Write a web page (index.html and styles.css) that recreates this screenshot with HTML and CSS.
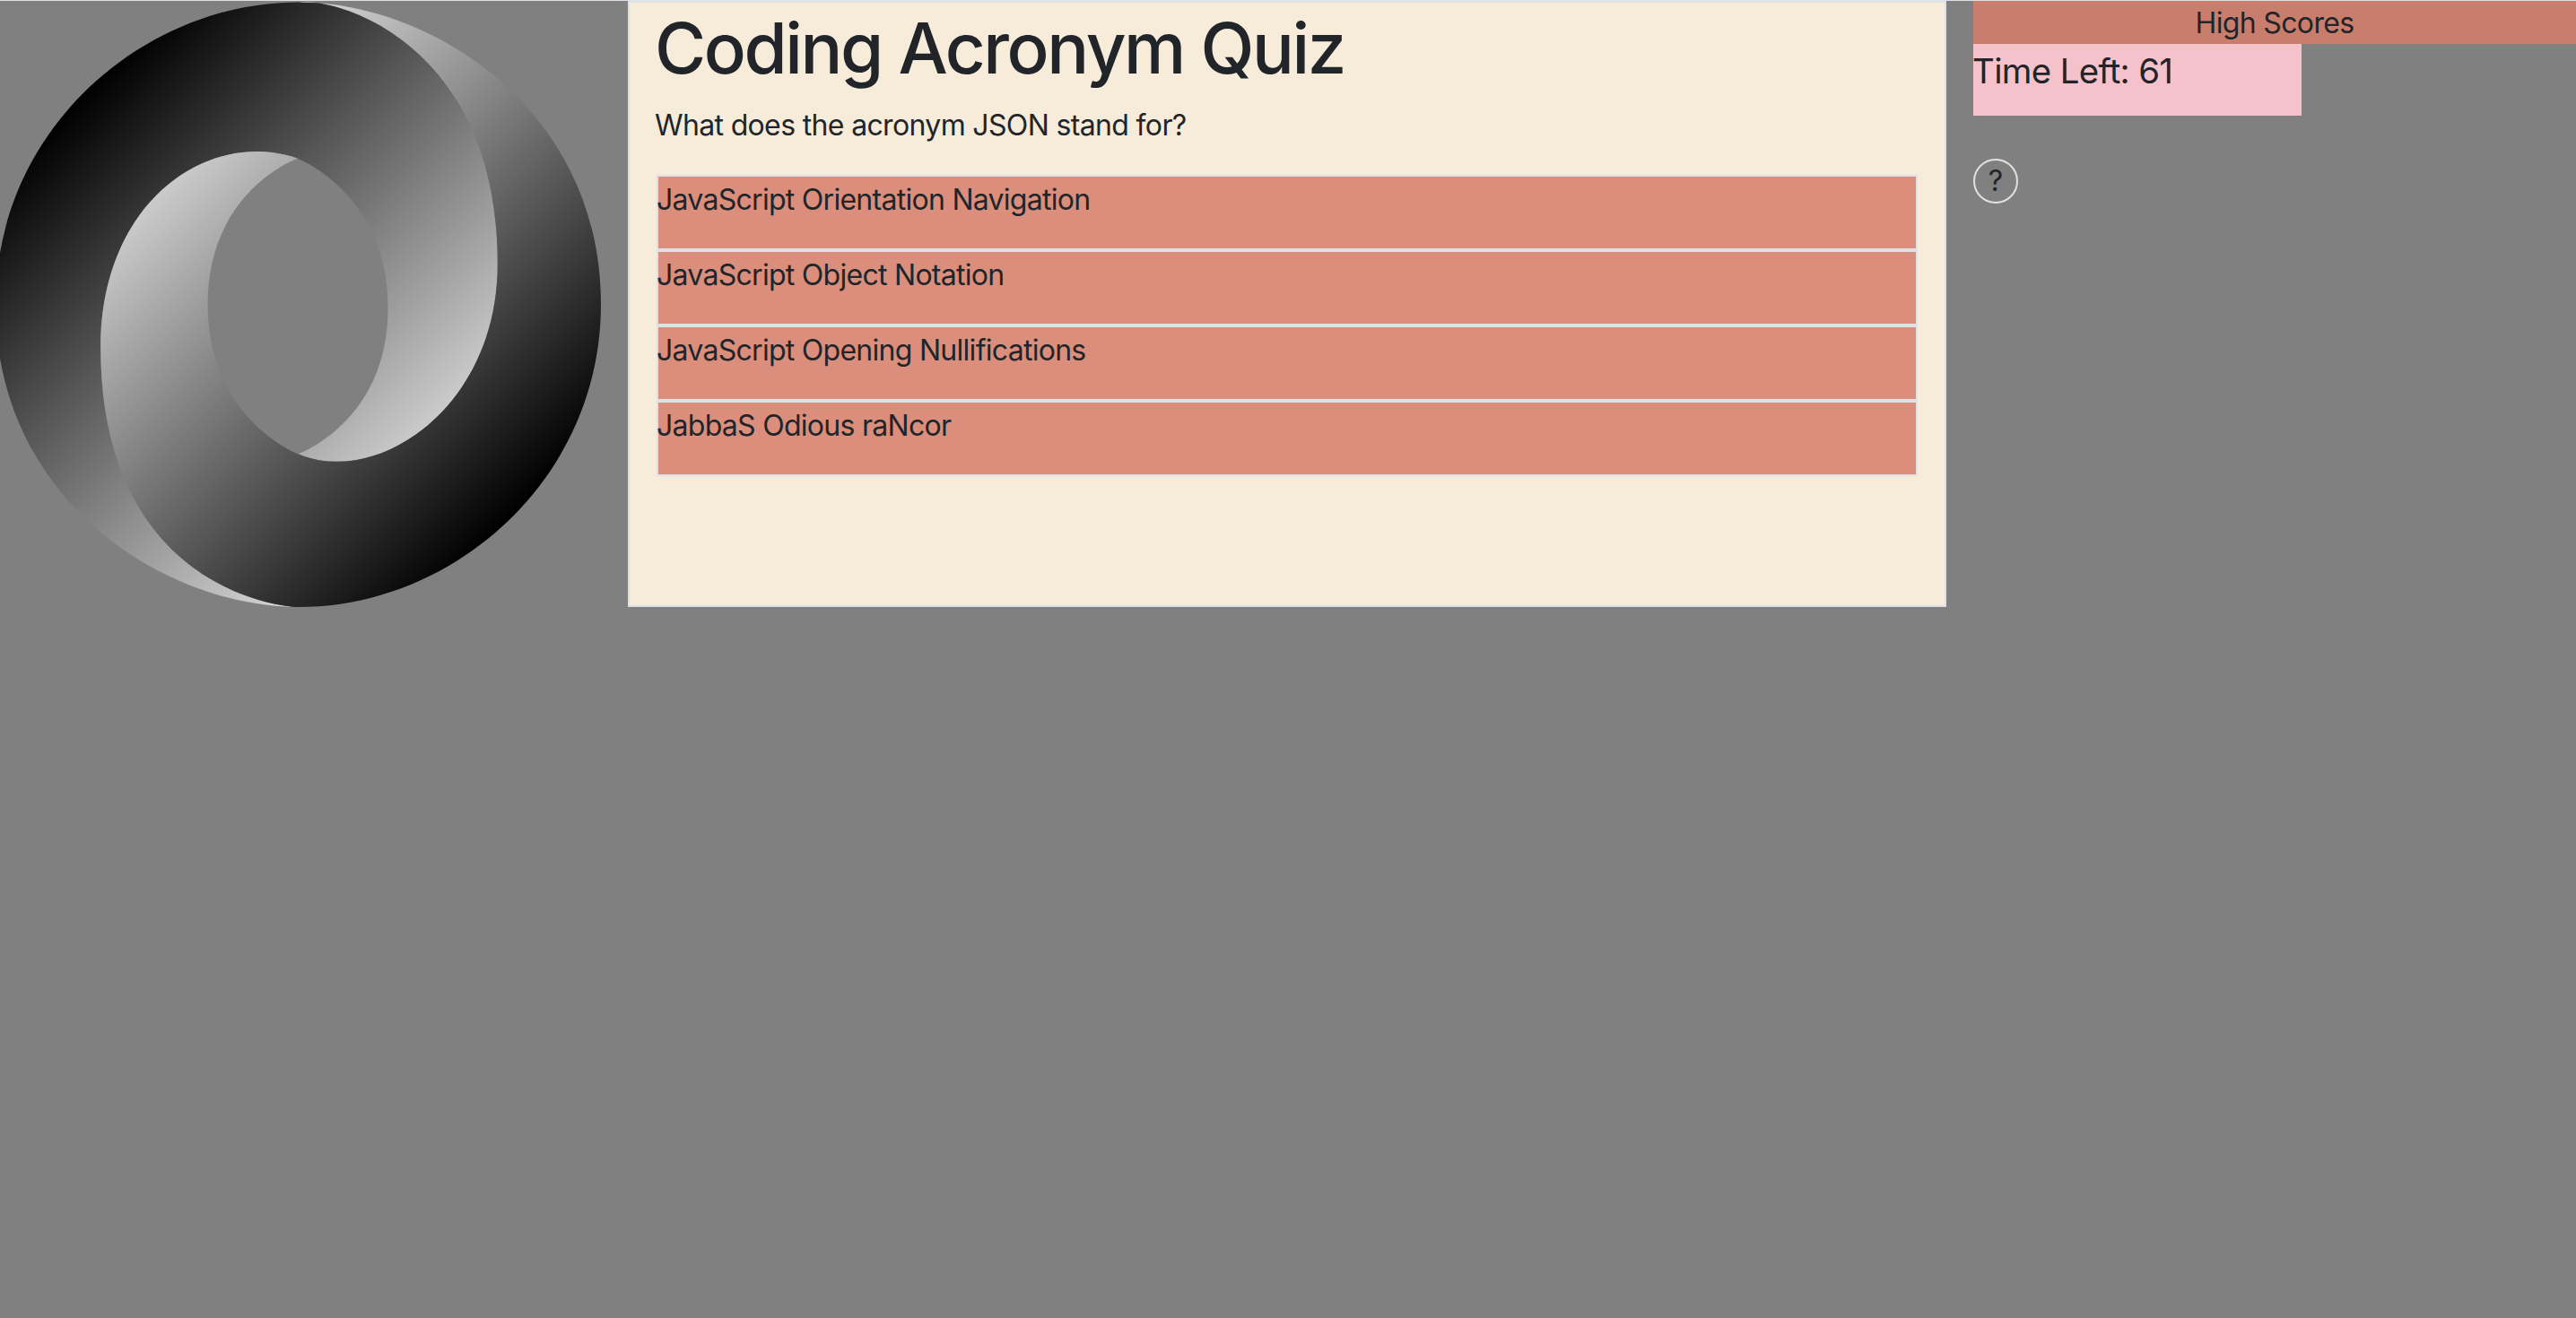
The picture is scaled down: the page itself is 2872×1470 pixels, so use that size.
FILE: index.html
```html
<!DOCTYPE html>
<html lang="en">
  <head>
    <meta charset="UTF-8" />
    <title>Coding Acronym Quiz</title>
    <link rel="stylesheet" href="styles.css">
  </head>
  <body>
    <div class="page">
      <div class="logo-col">
        <svg class="logo" viewBox="0 0 160 160" aria-label="JSON logo">
          <defs>
            <linearGradient id="grad-dark" gradientUnits="userSpaceOnUse" x1="23.66" y1="23.66" x2="136.4" y2="136.4">
              <stop offset="0" stop-color="#000000" />
              <stop offset="1" stop-color="#ffffff" />
            </linearGradient>
            <linearGradient id="grad-light" gradientUnits="userSpaceOnUse" x1="23.66" y1="23.66" x2="136.4" y2="136.4">
              <stop offset="0" stop-color="#ffffff" />
              <stop offset="1" stop-color="#000000" />
            </linearGradient>
          </defs>
          <path fill="url(#grad-dark)" fill-rule="evenodd" d="M79.974 119.549C100.638 128.389 132.688 107.565 132.688 69.309 132.688 10.648 89.91-1.25 80.165.1 38.93.1 0 33.907 0 80.135 0 131.516 44.653 160 80.164 160 74.5 160 27.78 154.278 27.78 91.23 27.78 52.618 56.433 33.34 79.823 41.4c.478.177 23.893 9.413 23.893 39.596 0 30.055-23.742 38.553-23.742 38.553z" />
          <path fill="url(#grad-light)" fill-rule="evenodd" d="M79.823 41.4C56.433 33.34 27.78 52.618 27.78 91.23c0 63.048 46.72 68.77 52.384 68.77C121.07 160 160 126.193 160 79.965 160 28.584 115.347.1 80.165.1c9.745-1.35 52.523 10.548 52.523 69.209 0 38.256-32.05 59.08-52.714 50.24-.478-.177-23.893-9.413-23.893-39.596 0-30.055 23.742-38.553 23.742-38.553z" />
        </svg>
      </div>

      <div class="quiz-card">
        <h1>Coding Acronym Quiz</h1>
        <p class="question">What does the acronym JSON stand for?</p>
        <ul class="answers">
          <li>JavaScript Orientation Navigation</li>
          <li>JavaScript Object Notation</li>
          <li>JavaScript Opening Nullifications</li>
          <li>JabbaS Odious raNcor</li>
        </ul>
      </div>

      <div class="side-col">
        <div class="high-scores">High Scores</div>
        <div class="timer">Time Left: 61</div>
        <button class="help">?</button>
      </div>
    </div>
  </body>
</html>
```

FILE: styles.css
```css
:root {
  --line: #dee2e6;
  --text: #212529;
}

* {
  box-sizing: border-box;
}

body {
  margin: 0;
  min-height: 1470px;
  background-color: #808080;
  color: var(--text);
  font-family: "Inter", "Liberation Sans", sans-serif;
  font-size: 32px;
  line-height: 48px;
  letter-spacing: -0.65px;
  overflow: hidden;
}

.page {
  display: grid;
  grid-template-columns: 700px 1470px 672px;
  align-items: start;
  border-top: 1px solid var(--line);
}

.logo-col {
  height: 676px;
  padding-top: 1px;
  overflow: hidden;
}

.logo {
  display: block;
  width: 675px;
  height: 675px;
  margin-left: -5px;
}

.quiz-card {
  height: 676px;
  padding: 1px 30px 0;
  background-color: #f7ecda;
  border: 2px solid var(--line);
  text-indent: -2px;
}

h1 {
  margin: 0 0 14px;
  padding-top: 2px;
  font-size: 78px;
  font-weight: 500;
  line-height: 96px;
  letter-spacing: -2.4px;
}

.question {
  margin: 0 0 31px;
}

.answers {
  list-style: none;
  margin: 0;
  padding: 0;
}

.answers li {
  height: 84px;
  padding-top: 2px;
  background-color: #db8e7b;
  border: 2px solid var(--line);
  letter-spacing: -0.72px;
}

.side-col {
  margin-left: 30px;
  margin-right: -30px;
}

.high-scores {
  height: 48px;
  padding-top: 1px;
  background-color: #c97e6d;
  text-align: center;
}

.timer {
  width: 366px;
  height: 80px;
  background-color: #f5c2cc;
  font-size: 38.4px;
  line-height: 60px;
  text-indent: -1px;
}

.help {
  display: block;
  width: 50px;
  height: 50px;
  margin-top: 48px;
  padding: 0;
  background-color: transparent;
  border: 2px solid var(--line);
  border-radius: 50%;
  color: var(--text);
  font-family: inherit;
  font-size: 32px;
  line-height: 44px;
}
```
